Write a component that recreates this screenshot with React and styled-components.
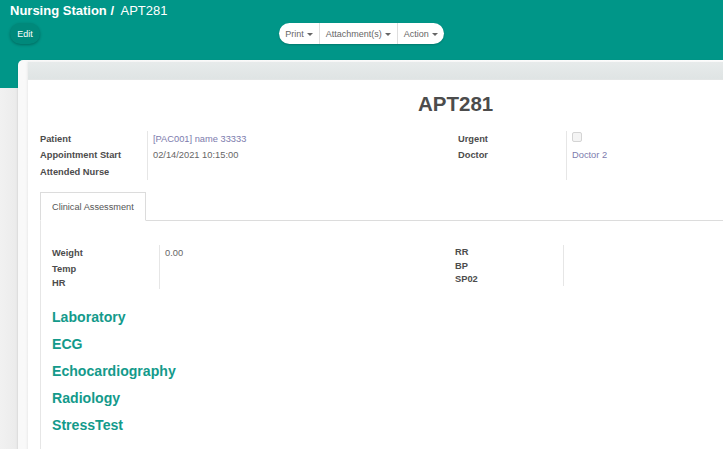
import React from "react";
import styled, { createGlobalStyle } from "styled-components";

const GlobalStyle = createGlobalStyle`
  html, body {
    margin: 0;
    padding: 0;
    background: #efefef;
    font-family: "Liberation Sans", Arial, sans-serif;
    overflow: hidden;
  }
`;

const Page = styled.div`
  height: 449px;
  width: 723px;
  overflow: hidden;
  display: flex;
  flex-direction: column;
  background: linear-gradient(to right, #f1f1f1 0, #ececec 15px, #e6e6e6 18px);
`;

const Header = styled.header`
  background: #009688;
  height: 88px;
  flex-shrink: 0;
  padding: 1px 10px 0;
  box-sizing: border-box;
`;

const Title = styled.div`
  height: 20px;
  line-height: 20px;
  font-size: 13px;
  color: #fff;
  white-space: nowrap;
  b {
    font-weight: bold;
  }
`;

const ButtonRow = styled.div`
  margin-top: 2px;
  display: grid;
  grid-template-columns: 1fr auto 1fr;
  align-items: center;
`;

const EditButton = styled.button`
  justify-self: start;
  height: 21px;
  width: 30px;
  padding: 0;
  border: none;
  border-radius: 11px;
  background: #00897b;
  color: #fff;
  font-family: inherit;
  font-size: 9px;
  box-shadow: 0 1px 3px rgba(0, 0, 0, 0.3);
`;

const Group = styled.div`
  display: flex;
  height: 21px;
  background: #fff;
  border-radius: 11px;
  box-shadow: 0 1px 2px rgba(0, 0, 0, 0.2);
  overflow: hidden;
`;

const GroupButton = styled.button`
  display: flex;
  align-items: center;
  gap: 3px;
  border: none;
  background: none;
  padding: 0 ${(p) => p.$pad || 6}px;
  font-family: inherit;
  font-size: 9px;
  color: #666;
  & + & {
    border-left: 1px solid #dedede;
  }
`;

const Caret = styled.span`
  width: 0;
  height: 0;
  border-left: 3px solid transparent;
  border-right: 3px solid transparent;
  border-top: 3px solid #666;
  margin-top: 1px;
`;

const Outer = styled.div`
  flex: 1;
  margin-top: -28px;
  margin-left: 18px;
  padding: 2px 0 0 10px;
  border-top-left-radius: 5px;
  background: linear-gradient(to right, #f9f9f9, #fdfdfd);
  box-shadow: -1px 0 1px rgba(0, 0, 0, 0.04);
  display: flex;
`;

const Sheet = styled.div`
  width: 860px;
  flex-shrink: 0;
  background: #fff;
  box-shadow: -1px 0 2px rgba(0, 0, 0, 0.06);
`;

const StatusBar = styled.div`
  height: 17px;
  background: linear-gradient(#e7ebeb, #dfe4e4);
  border-bottom: 1px solid #e3e6e6;
`;

const Content = styled.div`
  padding: 0 12px;
  color: #4c4c4c;
`;

const Heading = styled.h1`
  margin: 12px 0 14.5px;
  padding-left: 378px;
  font-size: 20.5px;
  line-height: 24px;
  font-weight: bold;
  color: #4c4c4c;
`;

const Columns = styled.div`
  display: grid;
  grid-template-columns: ${(p) => p.$left}px 1fr;
`;

const FieldGroup = styled.div`
  display: flex;
  flex-direction: column;
`;

const Row = styled.div`
  display: grid;
  grid-template-columns: ${(p) => p.$label}px 1fr;
  height: ${(p) => p.$h}px;
  align-items: center;
  font-size: 9.3px;
`;

const Label = styled.div`
  font-weight: bold;
  color: #4c4c4c;
  white-space: nowrap;
`;

const Value = styled.div`
  height: 100%;
  display: flex;
  align-items: center;
  border-left: 1px solid #e6e6e6;
  padding-left: 5px;
  color: ${(p) => (p.$link ? "#7c7bad" : "#666")};
`;

const Checkbox = styled.span`
  width: 8px;
  height: 8px;
  border: 1px solid #d4d4d4;
  border-radius: 2px;
  background: #f4f4f4;
  margin-top: -3px;
`;

const Tabs = styled.div`
  display: flex;
  margin-top: 12px;
`;

const Tab = styled.div`
  width: 106px;
  height: 29px;
  border: 1px solid #dcdcdc;
  border-bottom: 1px solid #fff;
  background: #fff;
  font-size: 9.2px;
  color: #555;
  display: flex;
  align-items: center;
  padding-left: 11px;
  box-sizing: border-box;
  position: relative;
  z-index: 1;
`;

const TabPane = styled.div`
  margin-top: -1px;
  border-top: 1px solid #dcdcdc;
  border-left: 1px solid #e6e6e6;
  padding: 23.5px 11px 20px;
  min-height: 400px;
`;

const Section = styled.h2`
  margin: 0;
  height: 27px;
  line-height: 27px;
  font-size: 14.1px;
  font-weight: bold;
  color: #139a8b;
`;

const Sections = styled.div`
  margin-top: 15px;
`;

const infoLeft = [
  { label: "Patient", value: "[PAC001] name 33333", link: true },
  { label: "Appointment Start", value: "02/14/2021 10:15:00" },
  { label: "Attended Nurse", value: "" },
];

const vitalsLeft = [
  { label: "Weight", value: "0.00", h: 17 },
  { label: "Temp", value: "", h: 15 },
  { label: "HR", value: "", h: 12 },
];

const vitalsRight = [
  { label: "RR", h: 15 },
  { label: "BP", h: 13 },
  { label: "SP02", h: 13 },
];

const sections = ["Laboratory", "ECG", "Echocardiography", "Radiology", "StressTest"];

export default function App() {
  return (
    <Page>
      <GlobalStyle />
      <Header>
        <Title>
          <b>Nursing Station /</b>&nbsp; APT281
        </Title>
        <ButtonRow>
          <EditButton>Edit</EditButton>
          <Group>
            <GroupButton>
              Print <Caret />
            </GroupButton>
            <GroupButton>
              Attachment(s) <Caret />
            </GroupButton>
            <GroupButton>
              Action <Caret />
            </GroupButton>
          </Group>
          <div />
        </ButtonRow>
      </Header>

      <Outer>
        <Sheet>
          <StatusBar />
          <Content>
            <Heading>APT281</Heading>

            <Columns $left={418}>
              <FieldGroup>
                {infoLeft.map((f) => (
                  <Row key={f.label} $label={107} $h={16.5}>
                    <Label>{f.label}</Label>
                    <Value $link={f.link}>{f.value}</Value>
                  </Row>
                ))}
              </FieldGroup>
              <FieldGroup>
                <Row $label={108} $h={16.5}>
                  <Label>Urgent</Label>
                  <Value>
                    <Checkbox />
                  </Value>
                </Row>
                <Row $label={108} $h={16.5}>
                  <Label>Doctor</Label>
                  <Value $link>Doctor 2</Value>
                </Row>
                <Row $label={108} $h={16.5}>
                  <Label />
                  <Value />
                </Row>
              </FieldGroup>
            </Columns>

            <Tabs>
              <Tab>Clinical Assessment</Tab>
            </Tabs>
            <TabPane>
              <Columns $left={403}>
                <FieldGroup>
                  {vitalsLeft.map((f) => (
                    <Row key={f.label} $label={107} $h={f.h}>
                      <Label>{f.label}</Label>
                      <Value>{f.value}</Value>
                    </Row>
                  ))}
                </FieldGroup>
                <FieldGroup>
                  {vitalsRight.map((f) => (
                    <Row key={f.label} $label={108} $h={f.h}>
                      <Label>{f.label}</Label>
                      <Value />
                    </Row>
                  ))}
                </FieldGroup>
              </Columns>
              <Sections>
                {sections.map((s) => (
                  <Section key={s}>{s}</Section>
                ))}
              </Sections>
            </TabPane>
          </Content>
        </Sheet>
      </Outer>
    </Page>
  );
}
